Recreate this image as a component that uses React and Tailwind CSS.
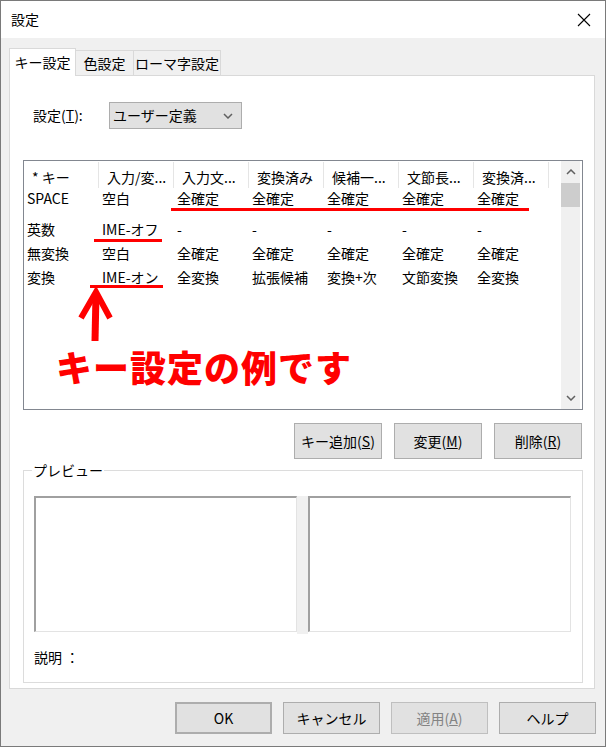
import React from 'react';

const HEADERS = ['* キー', '入力/変...', '入力文...', '変換済み', '候補一...', '文節長...', '変換済...'];

const ROWS = [
    ['英数', 'IME-オフ', '-', '-', '-', '-', '-'],
    ['無変換', '空白', '全確定', '全確定', '全確定', '全確定', '全確定'],
    ['変換', 'IME-オン', '全変換', '拡張候補', '変換+次', '文節変換', '全変換'],
];

const FONT = { fontFamily: '"Noto Sans CJK JP", "Noto Sans", sans-serif' };

function Row({ cells, className }) {
    return (
        <div className={`flex items-center ${className}`}>
            {cells.map((c, i) => (
                <div key={i} className="w-[75px] pl-[3px] whitespace-nowrap">{c}</div>
            ))}
        </div>
    );
}

function Chevron({ down }) {
    return (
        <svg width="10" height="6" viewBox="0 0 10 6" className="block">
            <polyline
                points={down ? '1,1 5,5 9,1' : '1,5 5,1 9,5'}
                fill="none"
                stroke="#606060"
                strokeWidth="1.5"
            />
        </svg>
    );
}

function Btn({ children, className = '' }) {
    return (
        <div className={`flex items-center justify-center bg-[#e1e1e1] border border-[#adadad] text-[14px] ${className}`}>
            {children}
        </div>
    );
}

export default function App() {
    return (
        <div style={FONT} className="w-[606px] h-[747px] flex flex-col bg-[#f0f0f0] border border-[#7a7a7a] text-black overflow-hidden">
            {/* title bar */}
            <div className="h-[37px] bg-white flex items-center justify-between pl-[10px] pr-[14px] shrink-0">
                <span className="text-[14px]">設定</span>
                <svg width="14" height="14" viewBox="0 0 14 14">
                    <path d="M1 1 L13 13 M13 1 L1 13" stroke="#000" strokeWidth="1.1" />
                </svg>
            </div>

            <div className="pt-[10px] pl-[8px] pr-[9px]">
                {/* tabs */}
                <div className="flex items-end h-[27px] text-[14px]">
                    <div className="relative z-10 w-[67px] h-[28px] -mb-[1px] bg-white border border-[#d9d9d9] border-b-0 flex items-center justify-center">
                        キー設定
                    </div>
                    <div className="w-[58px] h-[25px] border border-l-0 border-b-0 border-[#d9d9d9] flex items-center justify-center">
                        色設定
                    </div>
                    <div className="w-[87px] h-[25px] border border-l-0 border-b-0 border-[#d9d9d9] flex items-center justify-center">
                        ローマ字設定
                    </div>
                </div>

                {/* panel */}
                <div className="w-[586px] h-[614px] bg-white border border-[#d9d9d9] flex flex-col text-[14px]">
                    <div className="mt-[26px] pl-[23px] flex items-center">
                        <span className="w-[76px]">設定(<span className="underline">T</span>):</span>
                        <div className="w-[133px] h-[27px] bg-[#e1e1e1] border border-[#adadad] flex items-center justify-between pl-[3px] pr-[8px]">
                            <span>ユーザー定義</span>
                            <Chevron down />
                        </div>
                    </div>

                    {/* list view */}
                    <div className="relative mt-[31px] ml-[13px] w-[560px] h-[250px] border border-[#828790] flex">
                        <div className="w-[537px]">
                            <div className="flex h-[27px]">
                                {HEADERS.map((h) => (
                                    <div key={h} className="w-[75px] pl-[8px] pt-[4px] flex items-center border-r border-[#e5e5e5] mt-[1px] whitespace-nowrap">
                                        {h}
                                    </div>
                                ))}
                                <div className="w-[12px]" />
                            </div>
                            <Row className="h-[20px]" cells={['SPACE', '空白', '全確定', '全確定', '全確定', '全確定', '全確定']} />
                            <div className="h-[9px]" />
                            {ROWS.map((r) => (
                                <Row key={r[0]} className="h-[24px]" cells={r} />
                            ))}
                        </div>
                        {/* scrollbar */}
                        <div className="w-[19px] bg-[#f0f0f0] flex flex-col">
                            <div className="h-[22px] flex items-center justify-center">
                                <Chevron />
                            </div>
                            <div className="h-[24px] bg-[#cdcdcd]" />
                            <div className="flex-1" />
                            <div className="h-[22px] flex items-center justify-center">
                                <Chevron down />
                            </div>
                        </div>

                        {/* annotations */}
                        <div className="absolute left-[147px] top-[47px] w-[358px] h-[3px] bg-[#ff0000]" />
                        <div className="absolute left-[70px] top-[78px] w-[68px] h-[3px] bg-[#ff0000]" />
                        <div className="absolute left-[66px] top-[124px] w-[73px] h-[3px] bg-[#ff0000]" />
                        <svg className="absolute left-[51px] top-[127px]" width="40" height="56" viewBox="0 0 40 56">
                            <polyline points="6,30 21,4 35,30" fill="none" stroke="#ff0000" strokeWidth="6" strokeLinejoin="miter" />
                            <line x1="21" y1="6" x2="20" y2="53" stroke="#ff0000" strokeWidth="7" />
                        </svg>
                        <div className="absolute left-[32px] top-[187px] text-[36px] leading-none font-black text-[#ff0000] whitespace-nowrap tracking-[1px]">
                            キー設定の例です
                        </div>
                    </div>

                    {/* buttons */}
                    <div className="mt-[13px] pr-[12px] flex justify-end gap-[12px]">
                        <Btn className="w-[88px] h-[36px]">キー追加(<span className="underline">S</span>)</Btn>
                        <Btn className="w-[88px] h-[36px]">変更(<span className="underline">M</span>)</Btn>
                        <Btn className="w-[88px] h-[36px]">削除(<span className="underline">R</span>)</Btn>
                    </div>

                    {/* preview group */}
                    <div className="relative mt-[11px] ml-[13px] w-[560px] h-[213px] border border-[#dcdcdc] pt-[25px] pl-[10px]">
                        <span className="absolute left-[8px] -top-[10px] bg-white px-[1px] leading-[18px]">プレビュー</span>
                        <div className="flex">
                            <div className="w-[263px] h-[136px] border-t-2 border-l-2 border-[#a0a0a0] border-r border-b border-r-[#e3e3e3] border-b-[#e3e3e3] bg-white" />
                            <div className="w-[11px] h-[138px] bg-[#f0f0f0]" />
                            <div className="w-[263px] h-[136px] border-t-2 border-l-2 border-[#a0a0a0] border-r border-b border-r-[#e3e3e3] border-b-[#e3e3e3] bg-white" />
                        </div>
                        <div className="mt-[13px]">説明 ：</div>
                    </div>
                </div>

                {/* dialog buttons */}
                <div className="mt-[13px] flex justify-end gap-[11px]">
                    <Btn className="w-[97px] h-[32px] border-2 border-[#0078d7]">OK</Btn>
                    <Btn className="w-[97px] h-[32px]">キャンセル</Btn>
                    <Btn className="w-[97px] h-[32px] bg-[#cccccc] border-[#bfbfbf] text-[#838383]">
                        適用(<span className="underline">A</span>)
                    </Btn>
                    <Btn className="w-[97px] h-[32px]">ヘルプ</Btn>
                </div>
            </div>
        </div>
    );
}
